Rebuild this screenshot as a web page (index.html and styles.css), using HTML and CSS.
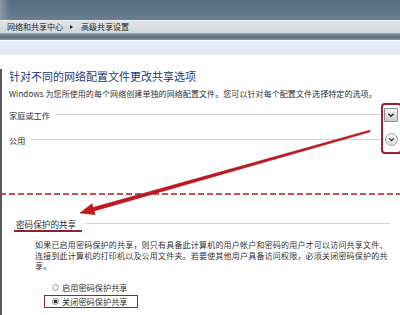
FILE: index.html
```html
<!DOCTYPE html>
<html lang="zh-CN">
<head>
<meta charset="utf-8">
<link rel="stylesheet" href="styles.css">
</head>
<body>
<div class="page">
  <div class="topband"><div class="glass"></div></div>
  <div class="crumb">
    <span>网络和共享中心</span>
    <span class="sep"></span>
    <span>高级共享设置</span>
  </div>
  <div class="darkstrip"></div>
  <div class="lavender"></div>
  <div class="main">
    <div class="title">针对不同的网络配置文件更改共享选项</div>
    <div class="desc">Windows 为您所使用的每个网络创建单独的网络配置文件。您可以针对每个配置文件选择特定的选项。</div>
    <div class="row row1">
      <span class="label">家庭或工作</span>
      <span class="rule"></span>
      <span class="btn btn-square"><svg viewBox="0 0 14 14" width="14" height="14"><path d="M4 5.5 L7 8.5 L10 5.5" fill="none" stroke="#2a2a2a" stroke-width="1.6"/></svg></span>
    </div>
    <div class="row row2">
      <span class="label">公用</span>
      <span class="rule"></span>
      <span class="btn btn-round"><svg viewBox="0 0 13 13" width="13" height="13"><path d="M3.8 5.2 L6.5 7.9 L9.2 5.2" fill="none" stroke="#2a2a2a" stroke-width="1.5"/></svg></span>
    </div>
    <div class="dashed"></div>
    <div class="sechead">
      <span class="sectitle">密码保护的共享</span>
      <span class="secrule"></span>
    </div>
    <p class="para">如果已启用密码保护的共享，则只有具备此计算机的用户帐户和密码的用户才可以访问共享文件、<br>连接到此计算机的打印机以及公用文件夹。若要使其他用户具备访问权限，必须关闭密码保护的共<br>享。</p>
    <div class="radio radio-first">
      <span class="dot"></span><span>启用密码保护共享</span>
    </div>
    <div class="radio radio-on">
      <span class="dot on"></span><span>关闭密码保护共享</span>
    </div>
  </div>
  <div class="hlbox"></div>
  <svg class="arrow" width="400" height="315" viewBox="0 0 400 315">
    <polygon points="370.2,131.8 94,210.9 95,214.6 80,213 92,203.8 93,207.5 369.8,130.2" fill="#c3161e" stroke="#a51018" stroke-width="0.6" stroke-linejoin="round"/>
  </svg>
</div>
</body>
</html>
```
FILE: styles.css
```css
html, body {
  margin: 0;
  padding: 0;
}
body {
  width: 400px;
  height: 315px;
  overflow: hidden;
  background: #ffffff;
  font-family: "Noto Sans CJK SC", "Noto Sans", sans-serif;
  color: #333333;
}
.page {
  position: relative;
  width: 400px;
  height: 315px;
  overflow: hidden;
}
.topband {
  height: 20px;
  background: linear-gradient(to bottom, #596c80 0%, #61758a 60%, #6b7e92 100%);
  position: relative;
}
.glass {
  position: absolute;
  left: 0;
  top: 0;
  width: 10px;
  height: 20px;
  background: linear-gradient(to right, #8a99a7, rgba(138,153,167,0));
}
.crumb {
  height: 13px;
  box-sizing: border-box;
  border-top: 1px solid #eef0f2;
  background: linear-gradient(to bottom, #dfe3e6, #d4d9dd);
  display: flex;
  align-items: center;
  padding-left: 7px;
  font-size: 8px;
  line-height: 12px;
  color: #1e1e1e;
  gap: 6px;
}
.sep {
  width: 0;
  height: 0;
  border-left: 3px solid #222;
  border-top: 2.5px solid transparent;
  border-bottom: 2.5px solid transparent;
  margin: 0 2px 0 1px;
}
.darkstrip {
  height: 7px;
  background: linear-gradient(to bottom, #a3adb6 0%, #6e7e8e 25%, #5f6f80 70%, #8f9ca8 100%);
}
.lavender {
  height: 15px;
  box-sizing: border-box;
  border-top: 1px solid #fbfbff;
  background: linear-gradient(to bottom, #eceefa, #e3e5f4 85%, #f2f3fb);
}
.main {
  height: 260px;
  box-sizing: border-box;
  border-left: 2px solid #555a5e;
  padding: 0 2px 0 7px;
}
.title {
  margin-top: 14px;
  font-size: 11px;
  line-height: 14px;
  color: #26397c;
  white-space: nowrap;
}
.desc {
  margin-top: 5px;
  font-size: 8px;
  line-height: 11px;
  color: #303030;
  white-space: nowrap;
  letter-spacing: 0.08px;
}
.row {
  display: flex;
  align-items: center;
  height: 15px;
}
.row1 {
  margin-top: 8px;
}
.row2 {
  margin-top: 10px;
}
.label {
  font-size: 8.2px;
  line-height: 12px;
  color: #333;
  white-space: nowrap;
}
.rule {
  flex: 1;
  height: 1px;
  background: #d2d2d2;
  margin: 0 2px 0 6px;
}
.btn {
  display: flex;
  width: 14px;
  height: 14px;
  box-sizing: border-box;
}
.btn-square {
  border: 1px solid #8d8d8d;
  background: linear-gradient(to bottom, #f4f4f4, #cfcfcf);
  border-radius: 1px;
  align-items: center;
  justify-content: center;
}
.btn-square svg {
  width: 12px;
  height: 12px;
}
.btn-round {
  width: 13px;
  height: 13px;
  border: 1px solid #a4a4a4;
  border-radius: 50%;
  background: linear-gradient(to bottom, #f6f6f6, #dcdcdc);
  margin: 0 0 0 1px;
  align-items: center;
  justify-content: center;
}
.btn-round svg {
  width: 11px;
  height: 11px;
}
.dashed {
  margin: 46px -2px 0 -9px;
  height: 2px;
  background: repeating-linear-gradient(to right, #b5393c 0 6px, rgba(255,255,255,0) 6px 9px);
  opacity: 0.85;
}
.sechead {
  display: flex;
  align-items: center;
  margin-top: 23px;
  height: 14px;
}
.sectitle {
  margin-left: 5px;
  padding: 0 6px 0 2px;
  font-size: 8.6px;
  line-height: 12px;
  color: #2e2e2e;
  border-bottom: 2px solid #8e2232;
  white-space: nowrap;
}
.secrule {
  flex: 1;
  height: 1px;
  background: #d6d6d6;
  margin: 0 8px 0 3px;
  position: relative;
  top: -2px;
}
.para {
  margin: 8px 0 0 26px;
  font-size: 8px;
  line-height: 10.5px;
  color: #333;
  white-space: nowrap;
  letter-spacing: 0.2px;
}
.radio {
  display: flex;
  align-items: center;
  gap: 3px;
  width: fit-content;
  height: 13px;
  box-sizing: border-box;
  margin-left: 35px;
  padding: 0 9px 0 7px;
  border: 1.5px solid transparent;
  font-size: 8.2px;
  line-height: 12px;
  color: #333;
  white-space: nowrap;
}
.radio-first {
  margin-top: 9px;
}
.radio-on {
  margin-top: 1px;
  border-color: #96202e;
}
.dot {
  width: 7px;
  height: 7px;
  box-sizing: border-box;
  border-radius: 50%;
  border: 1px solid #a8a8a8;
  background: radial-gradient(circle at 50% 40%, #ffffff, #dcdcdc);
  flex: none;
}
.dot.on {
  background: radial-gradient(circle, #2b3440 0 1.6px, #e0e0e0 2px);
  border-color: #8f8f8f;
}
.hlbox {
  position: absolute;
  left: 381px;
  top: 103px;
  width: 17px;
  height: 47px;
  border: 2px solid #a21e30;
  border-radius: 4px;
}
.arrow {
  position: absolute;
  left: 0;
  top: 0;
  pointer-events: none;
}
```
